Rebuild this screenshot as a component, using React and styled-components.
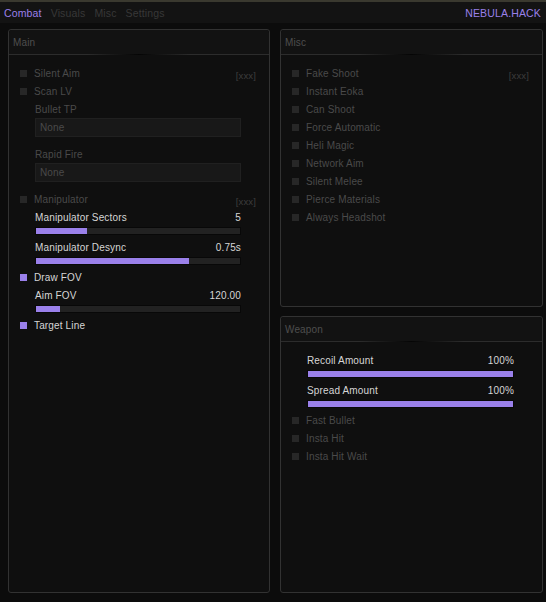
import styled, { createGlobalStyle } from 'styled-components'

const Global = createGlobalStyle`
  html, body { margin: 0; padding: 0; background: #0c0c0c; }
  body { font-family: "Liberation Sans", Arial, sans-serif; font-size: 10px; letter-spacing: 0.15px; }
`

const purple = '#9a80ea'

const Window = styled.div`
  width: 546px;
  height: 602px;
  display: flex;
  flex-direction: column;
  background: #0c0c0c;
  border-top: 2px solid #3a392f;
  box-sizing: border-box;
`
const TopBar = styled.div`
  height: 21px;
  display: flex;
  align-items: center;
  justify-content: space-between;
  padding: 0 5px 0 4px;
  background: #131313;
`
const Tabs = styled.div`
  display: flex;
  gap: 9px;
`
const Tab = styled.span`
  color: ${p => (p.$active ? purple : '#383838')};
  font-size: 10.5px;
`
const Brand = styled.span`
  color: ${purple};
  font-size: 10.5px;
`
const Content = styled.div`
  flex: 1;
  display: grid;
  grid-template-columns: 262px 263px;
  column-gap: 10px;
  padding: 6px 5px 9px 8px;
`
const Column = styled.div`
  display: flex;
  flex-direction: column;
  gap: 9px;
`
const Panel = styled.div`
  flex: ${p => p.$grow || 'none'};
  height: ${p => (p.$h ? p.$h + 'px' : 'auto')};
  border: 1px solid #323232;
  border-radius: 3px;
  background: #0f0f0f;
  box-sizing: border-box;
  display: flex;
  flex-direction: column;
`
const PanelHead = styled.div`
  height: 24px;
  display: flex;
  align-items: center;
  padding-left: 4px;
  color: #4e4e4e;
  background: #121212;
  border-bottom: 1px solid #2c2c2c;
  border-radius: 3px 3px 0 0;
  position: relative;
  &::after {
    content: '';
    position: absolute;
    left: 30%;
    right: 30%;
    bottom: -1px;
    height: 1px;
    background: linear-gradient(90deg, transparent, #050505, transparent);
  }
`
const PanelBody = styled.div`
  padding: 9px 28px 0 11px;
  display: flex;
  flex-direction: column;
`
const Row = styled.div`
  height: 18px;
  display: flex;
  align-items: center;
  position: relative;
`
const Box = styled.span`
  width: 7px;
  height: 7px;
  margin-right: 7px;
  background: ${p => (p.$on ? purple : '#272727')};
`
const Label = styled.span`
  color: ${p => (p.$on ? '#d6d6d6' : '#4a4a4a')};
  padding-left: ${p => (p.$indent ? '15px' : '0')};
`
const Bind = styled.span`
  position: absolute;
  right: -15px;
  top: 6px;
  color: #3d3d3d;
  font-size: 9.5px;
`
const SliderHead = styled.div`
  height: 18px;
  display: flex;
  align-items: center;
  justify-content: space-between;
  padding-left: 15px;
  color: #d6d6d6;
`
const Track = styled.div`
  height: 8px;
  margin: 1px 0 3px 15px;
  background: #222;
  border: 1px solid #080808;
  box-sizing: border-box;
`
const Fill = styled.div`
  height: 100%;
  background: ${purple};
`
const Select = styled.div`
  height: 19px;
  margin: 0 0 8px 15px;
  background: #181818;
  border: 1px solid #202020;
  box-sizing: border-box;
  display: flex;
  align-items: center;
  padding-left: 4px;
  color: #4a4a4a;
`

function Check({ on, children, bind }) {
  return (
    <Row>
      <Box $on={on} />
      <Label $on={on}>{children}</Label>
      {bind && <Bind>[xxx]</Bind>}
    </Row>
  )
}

function Slider({ label, value, pct }) {
  return (
    <>
      <SliderHead>
        <span>{label}</span>
        <span>{value}</span>
      </SliderHead>
      <Track>
        <Fill style={{ width: pct + '%' }} />
      </Track>
    </>
  )
}

const misc = ['Instant Eoka', 'Can Shoot', 'Force Automatic', 'Heli Magic', 'Network Aim', 'Silent Melee', 'Pierce Materials', 'Always Headshot']

export default function App() {
  return (
    <Window>
      <Global />
      <TopBar>
        <Tabs>
          <Tab $active>Combat</Tab>
          <Tab>Visuals</Tab>
          <Tab>Misc</Tab>
          <Tab>Settings</Tab>
        </Tabs>
        <Brand>NEBULA.HACK</Brand>
      </TopBar>
      <Content>
        <Column>
          <Panel $grow="1">
            <PanelHead>Main</PanelHead>
            <PanelBody>
              <Check bind>Silent Aim</Check>
              <Check>Scan LV</Check>
              <Row><Label $indent>Bullet TP</Label></Row>
              <Select>None</Select>
              <Row><Label $indent>Rapid Fire</Label></Row>
              <Select>None</Select>
              <Check bind>Manipulator</Check>
              <Slider label="Manipulator Sectors" value="5" pct={25} />
              <Slider label="Manipulator Desync" value="0.75s" pct={75} />
              <Check on>Draw FOV</Check>
              <Slider label="Aim FOV" value="120.00" pct={12} />
              <Check on>Target Line</Check>
            </PanelBody>
          </Panel>
        </Column>
        <Column>
          <Panel $h={278}>
            <PanelHead>Misc</PanelHead>
            <PanelBody>
              <Check bind>Fake Shoot</Check>
              {misc.map(m => <Check key={m}>{m}</Check>)}
            </PanelBody>
          </Panel>
          <Panel $grow="1">
            <PanelHead>Weapon</PanelHead>
            <PanelBody>
              <Slider label="Recoil Amount" value="100%" pct={100} />
              <Slider label="Spread Amount" value="100%" pct={100} />
              <Check>Fast Bullet</Check>
              <Check>Insta Hit</Check>
              <Check>Insta Hit Wait</Check>
            </PanelBody>
          </Panel>
        </Column>
      </Content>
    </Window>
  )
}
